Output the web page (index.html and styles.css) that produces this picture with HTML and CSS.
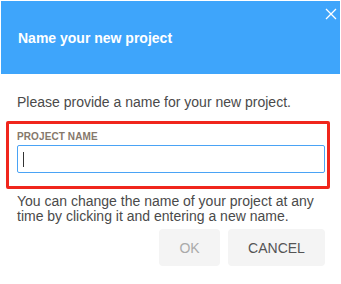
FILE: index.html
```html
<!DOCTYPE html>
<html lang="en">
   <head>
      <meta charset="UTF-8">
      <meta name="viewport" content="width=device-width, initial-scale=1.0">
      <title>Name your new project</title>
      <link rel="stylesheet" href="styles.css">
   </head>

   <body>
      <div class="dialog">
         <!-- HEADER -->
         <div class="dialog-header">
            <h1 class="dialog-title">Name your new project</h1>
            <button type="button" class="dialog-close" aria-label="Close">
               <svg width="12" height="12" viewBox="0 0 12 12">
                  <path d="M1 1 L11 11 M11 1 L1 11" stroke="#fff" stroke-width="1.3" fill="none"/>
               </svg>
            </button>
         </div>

         <!-- BODY -->
         <div class="dialog-body">
            <p class="dialog-text">Please provide a name for your new project.</p>

            <div class="field-highlight">
               <label class="field-label" for="project-name">PROJECT NAME</label>
               <div class="field-input">
                  <span class="caret"></span>
                  <input type="text" id="project-name" class="project-input" value=""/>
               </div>
            </div>

            <p class="dialog-note">You can change the name of your project at any time by clicking it and entering a new name.</p>

            <div class="dialog-actions">
               <button type="button" class="btn btn-ok" disabled>OK</button>
               <button type="button" class="btn btn-cancel">CANCEL</button>
            </div>
         </div>
      </div>
   </body>
</html>
```

FILE: styles.css
```css
*{
   box-sizing: border-box;
   margin: 0;
   padding: 0;
}

body{
   background: #fff;
   font-family: "Liberation Sans", Arial, sans-serif;
   color: #444;
}

.dialog{
   width: 341px;
   height: 284px;
   padding: 1px;
   background: #fff;
}

.dialog-header{
   position: relative;
   display: flex;
   align-items: center;
   height: 73px;
   padding: 0 17px;
   background: #3ea5fb;
}

.dialog-title{
   font-size: 14px;
   font-weight: bold;
   color: #fff;
   margin-top: 1px;
}

.dialog-close{
   position: absolute;
   top: 6px;
   right: 2px;
   width: 14px;
   height: 14px;
   display: flex;
   align-items: center;
   justify-content: center;
   border: none;
   background: none;
}

.dialog-body{
   padding: 0 15px 0 16px;
}

.dialog-text{
   font-size: 14px;
   line-height: 16px;
   margin-top: 20px;
   color: #4a4a4a;
}

.field-highlight{
   margin: 11px -5px 0 -11px;
   padding: 7px 2px 13px 8px;
   border: 3px solid #f0261c;
   border-radius: 2px;
}

.field-label{
   display: block;
   font-size: 10px;
   font-weight: bold;
   line-height: 12px;
   color: #86786b;
   letter-spacing: 0.1px;
}

.field-input{
   position: relative;
   margin-top: 2px;
}

.project-input{
   display: block;
   width: 100%;
   height: 28px;
   border: 1px solid #4aa3f5;
   border-radius: 2px;
   outline: none;
   font-family: inherit;
   font-size: 14px;
   padding: 0 6px;
}

.caret{
   position: absolute;
   left: 6px;
   top: 7px;
   width: 1px;
   height: 15px;
   background: #333;
}

.dialog-note{
   font-size: 14px;
   line-height: 15px;
   margin-top: 5px;
   color: #4a4a4a;
}

.dialog-actions{
   display: flex;
   justify-content: flex-end;
   gap: 8px;
   margin-top: 5px;
}

.btn{
   height: 37px;
   border: none;
   border-radius: 4px;
   background: #f4f4f4;
   font-family: inherit;
   font-size: 14px;
}

.btn-ok{
   width: 61px;
   color: #aaa;
}

.btn-cancel{
   width: 97px;
   color: #555;
}
```
